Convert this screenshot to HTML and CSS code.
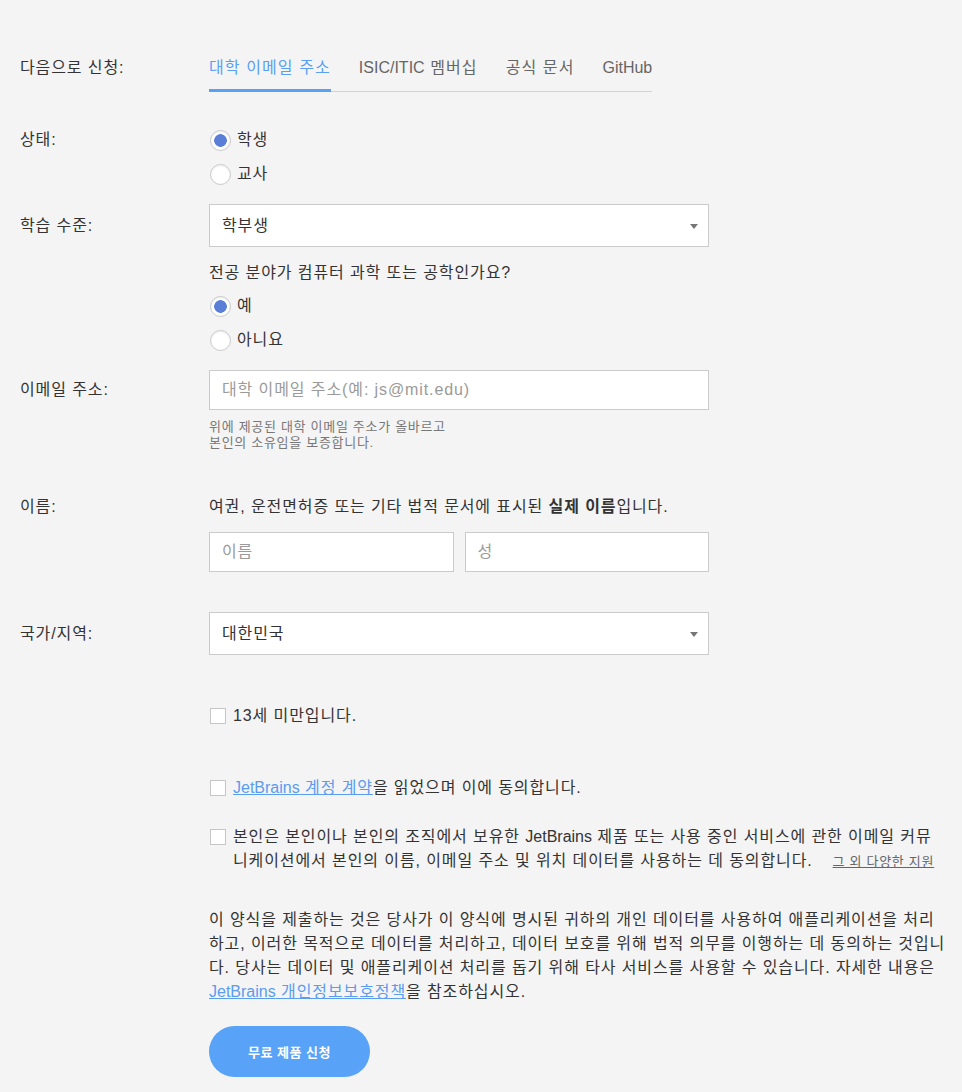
FILE: index.html
```html
<!DOCTYPE html>
<html lang="ko">
<head>
    <meta charset="UTF-8">
    <meta name="viewport" content="width=device-width, initial-scale=1.0">
    <title>무료 제품 신청</title>
    <link rel="stylesheet" href="styles.css">
</head>
<body>
    <div class="container">
        <div class="row">
            <div class="label">다음으로 신청:</div>
            <nav class="tabs">
                <a class="tab active">대학 이메일 주소</a>
                <a class="tab"><span class="en">ISIC/ITIC</span> 멤버십</a>
                <a class="tab">공식 문서</a>
                <a class="tab en">GitHub</a>
            </nav>
        </div>

        <div class="row status-row">
            <div class="label">상태:</div>
            <div class="field radio-group">
                <label class="radio"><input type="radio" name="status" checked>학생</label>
                <label class="radio"><input type="radio" name="status">교사</label>
            </div>
        </div>

        <div class="row center level-row">
            <div class="label">학습 수준:</div>
            <div class="field select">
                <span>학부생</span>
                <span class="caret"></span>
            </div>
        </div>

        <div class="row question-row">
            <div class="label"></div>
            <div class="field">
                <p class="question">전공 분야가 컴퓨터 과학 또는 공학인가요?</p>
                <div class="radio-group">
                    <label class="radio"><input type="radio" name="major" checked>예</label>
                    <label class="radio"><input type="radio" name="major">아니요</label>
                </div>
            </div>
        </div>

        <div class="row center email-row">
            <div class="label">이메일 주소:</div>
            <input class="field input" type="text" placeholder="대학 이메일 주소(예: js@mit.edu)">
        </div>
        <div class="row">
            <div class="label"></div>
            <p class="field help">위에 제공된 대학 이메일 주소가 올바르고<br>본인의 소유임을 보증합니다.</p>
        </div>

        <div class="row name-row">
            <div class="label">이름:</div>
            <div class="field">
                <p class="name-note">여권, 운전면허증 또는 기타 법적 문서에 표시된 <strong>실제 이름</strong>입니다.</p>
                <div class="name-inputs">
                    <input class="input" type="text" placeholder="이름">
                    <input class="input" type="text" placeholder="성">
                </div>
            </div>
        </div>

        <div class="row center country-row">
            <div class="label">국가/지역:</div>
            <div class="field select">
                <span>대한민국</span>
                <span class="caret"></span>
            </div>
        </div>

        <div class="row age-row">
            <div class="label"></div>
            <label class="check"><input type="checkbox"><span>13세 미만입니다.</span></label>
        </div>

        <div class="row agree-row">
            <div class="label"></div>
            <label class="check"><input type="checkbox"><span><a class="link"><span class="en">JetBrains</span> 계정 계약</a>을 읽었으며 이에 동의합니다.</span></label>
        </div>

        <div class="row consent-row">
            <div class="label"></div>
            <label class="check wide"><input type="checkbox"><span>본인은 본인이나 본인의 조직에서 보유한 <span class="en">JetBrains</span> 제품 또는 사용 중인 서비스에 관한 이메일 커뮤니케이션에서 본인의 이름, 이메일 주소 및 위치 데이터를 사용하는 데 동의합니다.<a class="more">그 외 다양한 지원</a></span></label>
        </div>

        <div class="row notice-row">
            <div class="label"></div>
            <p class="notice">이 양식을 제출하는 것은 당사가 이 양식에 명시된 귀하의 개인 데이터를 사용하여 애플리케이션을 처리하고, 이러한 목적으로 데이터를 처리하고, 데이터 보호를 위해 법적 의무를 이행하는 데 동의하는 것입니다. 당사는 데이터 및 애플리케이션 처리를 돕기 위해 타사 서비스를 사용할 수 있습니다. 자세한 내용은 <a class="link"><span class="en">JetBrains</span> 개인정보보호정책</a>을 참조하십시오.</p>
        </div>

        <div class="row submit-row">
            <div class="label"></div>
            <button class="submit">무료 제품 신청</button>
        </div>
    </div>
</body>
</html>
```

FILE: styles.css
```css
body {
    font-family: 'Liberation Sans', Arial, 'Noto Sans CJK KR', sans-serif;
    font-size: 16px;
    line-height: 24px;
    letter-spacing: 0.9px;
    color: #333;
    margin: 0;
    background: #f4f4f4;
}

p {
    margin: 0;
}

/* latin words keep their natural spacing */
.en {
    letter-spacing: 0;
}

.container {
    padding: 56px 12px 10px 20px;
}

.row {
    display: flex;
    align-items: flex-start;
}

.row.center {
    align-items: center;
}

.label {
    width: 189px;
    flex-shrink: 0;
}

.field {
    width: 500px;
    box-sizing: border-box;
}

/* tabs */
.tabs {
    display: flex;
    gap: 28px;
    border-bottom: 1px solid #d2d2d2;
}

.tab {
    font-size: 16px;
    letter-spacing: 1.1px;
    color: #666;
    padding-bottom: 9px;
    border-bottom: 3px solid transparent;
    margin-bottom: -1px;
    cursor: pointer;
}

.tab.en {
    letter-spacing: 0;
}

.tab.active {
    color: #5a9ef5;
    border-bottom-color: #58a1f5;
}

/* radios */
.status-row {
    margin-top: 36px;
}

.radio-group {
    display: flex;
    flex-direction: column;
    gap: 10px;
}

.radio {
    display: flex;
    align-items: center;
    height: 24px;
}

.radio input {
    appearance: none;
    width: 21px;
    height: 21px;
    margin: 0 6px 0 1px;
    border: 1px solid #c9c9c9;
    border-radius: 50%;
    background: #fff;
    box-shadow: inset 0 1px 2px rgba(0,0,0,0.08);
}

.radio input:checked {
    background: radial-gradient(circle, #5b7fd7 0 6px, #fff 6.6px);
}

/* select */
.level-row {
    margin-top: 18px;
}

.select {
    height: 43px;
    display: flex;
    align-items: center;
    justify-content: space-between;
    padding: 0 10px 0 12px;
    background: #fff;
    border: 1px solid #cbcbcb;
}

.caret {
    width: 0;
    height: 0;
    border-left: 4px solid transparent;
    border-right: 4px solid transparent;
    border-top: 5px solid #777;
    margin-top: 2px;
}

.question-row {
    margin-top: 14px;
}

.question {
    margin-bottom: 9px;
}

/* inputs */
.input {
    height: 40px;
    padding: 0 12px;
    font-family: inherit;
    font-size: 16px;
    letter-spacing: inherit;
    color: #333;
    background: #fff;
    border: 1px solid #cbcbcb;
    border-radius: 0;
    box-sizing: border-box;
    outline: none;
}

.input::placeholder {
    color: #9a9a9a;
}

.email-row {
    margin-top: 18px;
}

.help {
    margin-top: 9px;
    font-size: 13px;
    line-height: 16px;
    letter-spacing: 0.7px;
    color: #777;
}

.name-row {
    margin-top: 44px;
}

.name-note strong {
    font-weight: bold;
}

.name-inputs {
    display: flex;
    gap: 11px;
    margin-top: 13px;
}

.name-inputs .input {
    flex: 1;
    min-width: 0;
}

.country-row {
    margin-top: 40px;
}

/* checkboxes */
.check {
    display: flex;
    align-items: flex-start;
}

.check input {
    appearance: none;
    flex-shrink: 0;
    width: 16px;
    height: 16px;
    margin: 4px 7px 0 1px;
    background: #fff;
    border: 1px solid #c6c6c6;
}

.check.wide {
    width: 730px;
}

.age-row {
    margin-top: 49px;
}

.agree-row {
    margin-top: 48px;
}

.consent-row {
    margin-top: 25px;
}

.link {
    color: #5a9cf0;
    text-decoration: underline;
    cursor: pointer;
}

.more {
    font-size: 13px;
    letter-spacing: 0.7px;
    color: #666;
    text-decoration: underline;
    margin-left: 20px;
    cursor: pointer;
}

.notice-row {
    margin-top: 34px;
}

.notice {
    width: 741px;
}

.submit-row {
    margin-top: 22px;
}

.submit {
    width: 161px;
    height: 51px;
    border: none;
    border-radius: 26px;
    background: #58a2f7;
    color: #fff;
    font-family: inherit;
    font-size: 13px;
    font-weight: bold;
    letter-spacing: 0.5px;
    cursor: pointer;
}
```
